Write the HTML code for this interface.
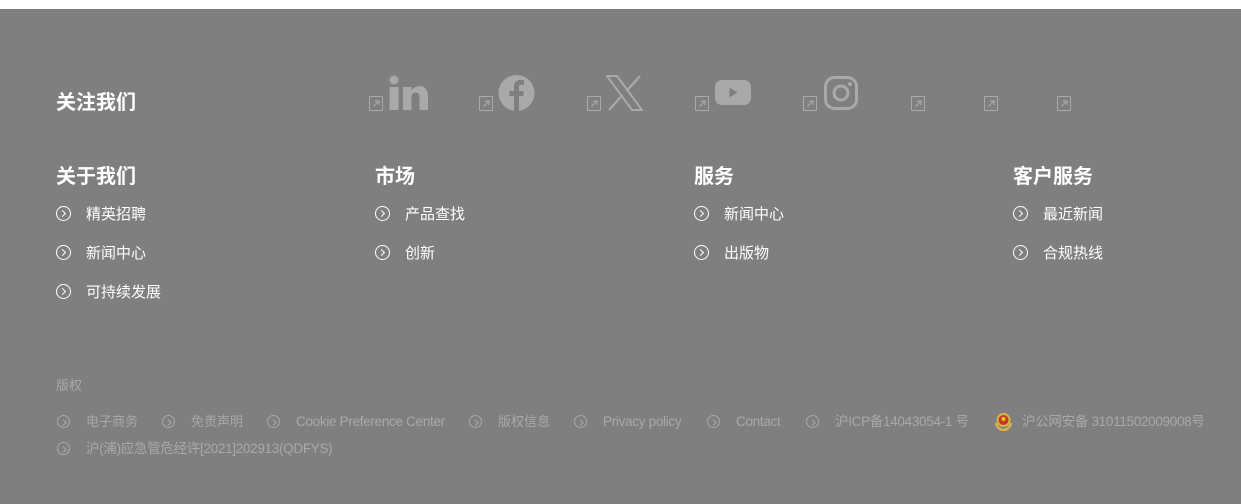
<!DOCTYPE html>
<html><head><meta charset="utf-8"><style>
*{margin:0;padding:0;box-sizing:border-box}
body{width:1241px;height:504px;background:#7f7f7f;font-family:"Liberation Sans","Noto Sans CJK SC",sans-serif;position:relative;overflow:hidden}
.top{position:absolute;left:0;top:0;width:1241px;height:9px;background:#fff}
.a{position:absolute;white-space:nowrap}
.h{color:#fff;font-weight:bold;font-size:20px;line-height:24px}
.l{color:#fff;font-size:15px;line-height:20px}
.ci{position:absolute;width:15px;height:15px;border:1.6px solid #fff;border-radius:50%}
.ci:after{content:"";position:absolute;left:2.6px;top:3.6px;width:4px;height:4px;border-right:1.6px solid #fff;border-top:1.6px solid #fff;transform:rotate(45deg)}
.g{color:#a9a9a9;font-size:13.5px;line-height:18px}
.c{font-size:13px}
.gc{position:absolute;width:13px;height:13px;border:1px solid #a9a9a9;border-radius:50%}
.gc:after{content:"";position:absolute;left:2.5px;top:3.5px;width:3.5px;height:3.5px;border-right:1px solid #a9a9a9;border-top:1px solid #a9a9a9;transform:rotate(45deg)}
.ex{position:absolute;width:14px;height:15px;border:1.3px solid #a9a9a9;border-radius:1px}
.ex svg{position:absolute;left:1.5px;top:1.5px}
svg.s{position:absolute}
</style></head><body>
<div class="top"></div>
<div class="a h" style="left:56px;top:91px">关注我们</div>

<div class="ex" style="left:369px;top:96px"><svg width="9" height="9"><path d="M1.5 7.5L7 2M3 2h4v4" stroke="#a9a9a9" stroke-width="1.2" fill="none"/></svg></div>
<svg class="s" style="left:389px;top:75px" width="39" height="36"><circle cx="5" cy="5" r="4.5" fill="#a9a9a9"/><rect x="0.5" y="12" width="9" height="23" fill="#a9a9a9"/><path d="M14 12h8.5v3.5c1.5-2.5 4-4.2 8-4.2c6 0 8.5 3.5 8.5 10V35h-8.5V22c0-3-1-4.5-3.8-4.5c-2.8 0-4.2 2-4.2 5V35H14z" fill="#a9a9a9"/></svg>

<div class="ex" style="left:479px;top:96px"><svg width="9" height="9"><path d="M1.5 7.5L7 2M3 2h4v4" stroke="#a9a9a9" stroke-width="1.2" fill="none"/></svg></div>
<svg class="s" style="left:498px;top:75px" width="37" height="36"><circle cx="18.5" cy="18" r="18" fill="#a9a9a9"/><path d="M16 36V21h-4.5v-5H16v-4c0-4.5 2.5-7 6.5-7c1.5 0 3 .2 3.5.3v4.3h-2.3c-2 0-2.7 1-2.7 2.8v3.6h5l-.8 5h-4.2v15z" fill="#7f7f7f"/></svg>

<div class="ex" style="left:587px;top:96px"><svg width="9" height="9"><path d="M1.5 7.5L7 2M3 2h4v4" stroke="#a9a9a9" stroke-width="1.2" fill="none"/></svg></div>
<svg class="s" style="left:606px;top:75px" width="37" height="36"><path d="M1 1h10l25 34H26z" fill="none" stroke="#a9a9a9" stroke-width="2"/><path d="M34 1L20.5 16M3 35l13.5-15" stroke="#a9a9a9" stroke-width="2.2"/></svg>

<div class="ex" style="left:695px;top:96px"><svg width="9" height="9"><path d="M1.5 7.5L7 2M3 2h4v4" stroke="#a9a9a9" stroke-width="1.2" fill="none"/></svg></div>
<svg class="s" style="left:715px;top:80px" width="36" height="25"><rect x="0" y="0" width="36" height="25" rx="7" fill="#a9a9a9"/><path d="M14.5 7.5v10l8-5z" fill="#7f7f7f"/></svg>

<div class="ex" style="left:803px;top:96px"><svg width="9" height="9"><path d="M1.5 7.5L7 2M3 2h4v4" stroke="#a9a9a9" stroke-width="1.2" fill="none"/></svg></div>
<svg class="s" style="left:824px;top:76px" width="34" height="34"><rect x="1.5" y="1.5" width="31" height="31" rx="9" fill="none" stroke="#a9a9a9" stroke-width="3"/><circle cx="17" cy="17" r="7" fill="none" stroke="#a9a9a9" stroke-width="3"/><circle cx="26" cy="8" r="2" fill="#a9a9a9"/></svg>

<div class="ex" style="left:911px;top:96px"><svg width="9" height="9"><path d="M1.5 7.5L7 2M3 2h4v4" stroke="#a9a9a9" stroke-width="1.2" fill="none"/></svg></div>
<div class="ex" style="left:984px;top:96px"><svg width="9" height="9"><path d="M1.5 7.5L7 2M3 2h4v4" stroke="#a9a9a9" stroke-width="1.2" fill="none"/></svg></div>
<div class="ex" style="left:1057px;top:96px"><svg width="9" height="9"><path d="M1.5 7.5L7 2M3 2h4v4" stroke="#a9a9a9" stroke-width="1.2" fill="none"/></svg></div>

<div class="a h" style="left:56px;top:165px">关于我们</div>
<div class="a h" style="left:375px;top:165px">市场</div>
<div class="a h" style="left:694px;top:165px">服务</div>
<div class="a h" style="left:1013px;top:165px">客户服务</div>

<div class="ci" style="left:56px;top:206px"></div><div class="a l" style="left:86px;top:205px">精英招聘</div>
<div class="ci" style="left:56px;top:245px"></div><div class="a l" style="left:86px;top:244px">新闻中心</div>
<div class="ci" style="left:56px;top:284px"></div><div class="a l" style="left:86px;top:283px">可持续发展</div>
<div class="ci" style="left:375px;top:206px"></div><div class="a l" style="left:405px;top:205px">产品查找</div>
<div class="ci" style="left:375px;top:245px"></div><div class="a l" style="left:405px;top:244px">创新</div>
<div class="ci" style="left:694px;top:206px"></div><div class="a l" style="left:724px;top:205px">新闻中心</div>
<div class="ci" style="left:694px;top:245px"></div><div class="a l" style="left:724px;top:244px">出版物</div>
<div class="ci" style="left:1013px;top:206px"></div><div class="a l" style="left:1043px;top:205px">最近新闻</div>
<div class="ci" style="left:1013px;top:245px"></div><div class="a l" style="left:1043px;top:244px">合规热线</div>

<div class="a g" style="left:56px;top:377px;font-size:13px">版权</div>
<div class="gc" style="left:57px;top:415px"></div><div class="a g c" style="left:86px;top:413px">电子商务</div>
<div class="gc" style="left:162px;top:415px"></div><div class="a g c" style="left:191px;top:413px">免责声明</div>
<div class="gc" style="left:267px;top:415px"></div><div class="a g" style="left:296px;top:413px;letter-spacing:-0.3px">Cookie Preference Center</div>
<div class="gc" style="left:469px;top:415px"></div><div class="a g c" style="left:498px;top:413px">版权信息</div>
<div class="gc" style="left:574px;top:415px"></div><div class="a g" style="left:603px;top:413px;letter-spacing:-0.3px">Privacy policy</div>
<div class="gc" style="left:707px;top:415px"></div><div class="a g" style="left:736px;top:413px;letter-spacing:-0.3px">Contact</div>
<div class="gc" style="left:806px;top:415px"></div><div class="a g" style="left:835px;top:413px;letter-spacing:-0.3px">沪ICP备14043054-1 号</div>
<svg class="s" style="left:994px;top:411px" width="19" height="20"><path d="M2 12c1 5 5 7 7.5 7s6.5-2 7.5-7" stroke="#d8b24a" stroke-width="2.5" fill="none"/><circle cx="9.5" cy="9" r="7" fill="#d8b24a"/><circle cx="9.5" cy="9" r="5" fill="#c0392b"/><circle cx="9.5" cy="8" r="2" fill="#f1c40f"/></svg>
<div class="a g" style="left:1022px;top:413px;letter-spacing:-0.3px">沪公网安备 31011502009008号</div>
<div class="gc" style="left:57px;top:442px"></div><div class="a g" style="left:86px;top:440px;letter-spacing:-0.3px">沪(浦)应急管危经许[2021]202913(QDFYS)</div>
</body></html>
